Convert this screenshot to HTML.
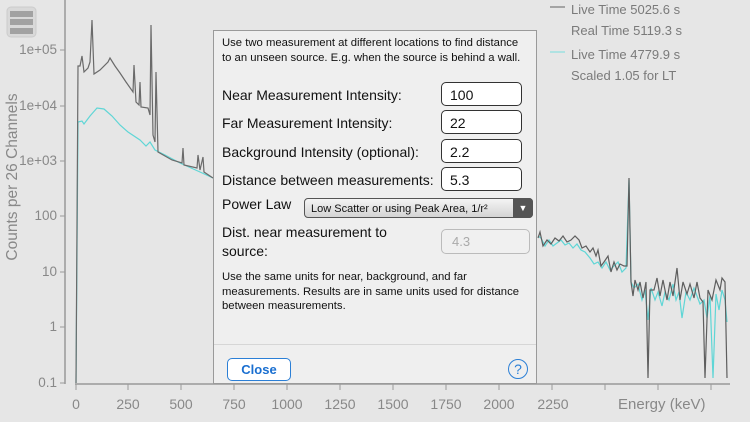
<!DOCTYPE html>
<html><head><style>
body{margin:0;width:750px;height:422px;background:#e6e6e6;font-family:"Liberation Sans",sans-serif;overflow:hidden;position:relative}
.a{position:absolute}
.dlg{position:absolute;left:213px;top:30px;width:324px;height:354px;background:#efefef;border:1px solid #9a9a9a;box-sizing:border-box}
.lab{position:absolute;left:8px;font-size:14px;color:#111}
.inp{position:absolute;left:227px;width:81px;height:24px;box-sizing:border-box;border:1px solid #333;border-radius:5px;background:#fff;font-size:14px;padding:4px 0 0 8px;color:#111}
.sm{position:absolute;left:8px;font-size:11.3px;line-height:14.5px;color:#111}
.yl{position:absolute;right:693px;font-size:13.5px;color:#888;text-align:right}
.xl{position:absolute;top:396px;font-size:14px;color:#888;transform:translateX(-50%)}
.leg{position:absolute;left:571px;font-size:13px;color:#7a7a7a}
</style></head><body>
<svg class="a" style="left:0;top:0" width="750" height="422">
<line x1="65" y1="0" x2="65" y2="384" stroke="#999" stroke-width="1.5"/>
<line x1="75" y1="384" x2="730" y2="384" stroke="#999" stroke-width="1.5"/>
<g stroke="#999">
<line x1="60" y1="50" x2="65" y2="50"/><line x1="60" y1="106" x2="65" y2="106"/><line x1="60" y1="161" x2="65" y2="161"/><line x1="60" y1="216" x2="65" y2="216"/><line x1="60" y1="272" x2="65" y2="272"/><line x1="60" y1="327" x2="65" y2="327"/><line x1="60" y1="383" x2="65" y2="383"/>
<line x1="76" y1="384" x2="76" y2="390"/><line x1="128" y1="384" x2="128" y2="390"/><line x1="181" y1="384" x2="181" y2="390"/><line x1="234" y1="384" x2="234" y2="390"/><line x1="287" y1="384" x2="287" y2="390"/><line x1="340" y1="384" x2="340" y2="390"/><line x1="393" y1="384" x2="393" y2="390"/><line x1="446" y1="384" x2="446" y2="390"/><line x1="499" y1="384" x2="499" y2="390"/><line x1="552" y1="384" x2="552" y2="390"/><line x1="605" y1="384" x2="605" y2="390"/><line x1="658" y1="384" x2="658" y2="390"/><line x1="711" y1="384" x2="711" y2="390"/>
</g>
<polyline fill="none" stroke="#5fd6d6" stroke-width="1.2" points="76,383 78,122 82,121 84,124 90,116 97,108 104,109 112,116 120,125 128,132 140,140 146,146 150,142 155,150 165,155 180,163 200,172 213,178"/>
<polyline fill="none" stroke="#6a6a6a" stroke-width="1.2" points="76,383 78,66 80,66 82,56 84,72 88,68 90,62 92,20 94,74 100,70 108,62 110,58 115,66 120,73 126,82 133,92 134,65 136,102 139,105 140,82 141,107 148,108 150,115 151,25 153,135 155,142 156,72 158,152 165,156 172,160 182,163 183,148 184,165 197,168 198,155 200,170 203,157 204,172 213,178"/>
<polyline fill="none" stroke="#5fd6d6" stroke-width="1.2" points="538,236 541,238 545,246 549,240 553,246 557,243 561,240 565,245 569,243 573,248 577,244 581,250 585,252 590,258 594,264 598,262 602,268 606,262 610,270 614,266 618,262 622,272 626,268 629,180 631,282 634,288 638,284 642,300 645,290 648,320 651,288 655,300 658,292 662,306 665,292 669,300 673,284 676,300 679,292 682,318 686,292 690,300 694,288 697,296 700,304 704,300 707,318 710,296 713,378 716,294 719,310 722,290 725,300 727,322"/>
<polyline fill="none" stroke="#5e5e5e" stroke-width="1.2" points="538,238 540,232 543,246 547,240 551,244 555,238 559,241 563,236 567,242 571,240 575,236 579,240 582,248 586,246 590,252 593,248 596,256 598,250 601,266 604,262 608,256 611,272 614,262 617,270 620,264 624,266 627,266 629,178 631,282 633,296 635,280 638,290 640,282 643,298 646,282 648,378 650,290 654,290 657,278 660,296 663,280 667,300 670,282 673,296 677,268 680,300 683,282 687,294 690,284 694,298 697,282 700,298 703,302 705,378 708,290 712,300 716,280 720,290 722,278 725,282 727,378"/>
<line x1="550" y1="7" x2="565" y2="7" stroke="#777" stroke-width="1.2"/>
<line x1="550" y1="52" x2="565" y2="52" stroke="#8ae0e0" stroke-width="1.2"/>
<rect x="7" y="7" width="29" height="30" rx="4" fill="#d9d9d9" stroke="#ccc"/>
<rect x="10" y="11" width="23" height="6" fill="#a2a2a2"/><rect x="10" y="19" width="23" height="6" fill="#a2a2a2"/><rect x="10" y="28" width="23" height="6" fill="#a2a2a2"/>
</svg>
<div class="a" style="left:-87px;top:168px;width:200px;transform:rotate(-90deg);font-size:15.5px;color:#888;white-space:nowrap;text-align:center">Counts per 26 Channels</div>
<div class="yl" style="top:42px">1e+05</div><div class="yl" style="top:98px">1e+04</div><div class="yl" style="top:153px">1e+03</div><div class="yl" style="top:208px">100</div><div class="yl" style="top:264px">10</div><div class="yl" style="top:319px">1</div><div class="yl" style="top:375px">0.1</div>
<div class="xl" style="left:76px">0</div><div class="xl" style="left:128px">250</div><div class="xl" style="left:181px">500</div><div class="xl" style="left:234px">750</div><div class="xl" style="left:287px">1000</div><div class="xl" style="left:340px">1250</div><div class="xl" style="left:393px">1500</div><div class="xl" style="left:446px">1750</div><div class="xl" style="left:499px">2000</div><div class="xl" style="left:553px">2250</div>
<div class="a" style="left:618px;top:396px;font-size:15px;color:#888">Energy (keV)</div>
<div class="leg" style="top:2px">Live Time 5025.6 s</div>
<div class="leg" style="top:23px">Real Time 5119.3 s</div>
<div class="leg" style="top:47px">Live Time 4779.9 s</div>
<div class="leg" style="top:68px">Scaled 1.05 for LT</div>
<div class="dlg">
<div class="sm" style="top:5px">Use two measurement at different locations to find distance<br>to an unseen source. E.g. when the source is behind a wall.</div>
<div class="lab" style="top:56px">Near Measurement Intensity:</div>
<div class="lab" style="top:84px">Far Measurement Intensity:</div>
<div class="lab" style="top:113px">Background Intensity (optional):</div>
<div class="lab" style="top:141px">Distance between measurements:</div>
<div class="lab" style="top:165px">Power Law</div>
<div class="lab" style="top:192px;line-height:19px">Dist. near measurement to<br>source:</div>
<div class="inp" style="top:51px">100</div>
<div class="inp" style="top:79px">22</div>
<div class="inp" style="top:108px">2.2</div>
<div class="inp" style="top:136px">5.3</div>
<div class="a" style="left:90px;top:167px;width:229px;height:20px;box-sizing:border-box;border:1px solid #555;border-radius:4px;background:linear-gradient(#f4f4f4,#d4d4d4);font-size:11px;padding:4px 0 0 6px;color:#111">Low Scatter or using Peak Area, 1/r²<div class="a" style="right:-1px;top:-1px;width:20px;height:20px;background:#555;border-radius:0 4px 4px 0;color:#fff;font-size:9px;text-align:center;line-height:20px">▼</div></div>
<div class="a" style="left:227px;top:198px;width:89px;height:25px;box-sizing:border-box;border:1px solid #bbb;border-radius:5px;background:#f0f0f0;font-size:13px;padding:4px 0 0 10px;color:#aaa">4.3</div>
<div class="sm" style="top:239px">Use the same units for near, background, and far<br>measurements. Results are in same units used for distance<br>between measurements.</div>
<div class="a" style="left:0;top:313px;width:322px;height:1px;background:#d6d6d6"></div>
<div class="a" style="left:13px;top:327px;width:64px;height:23px;box-sizing:border-box;border:1px solid #2b7fd6;border-radius:5px;background:#fff;color:#1a6fd0;font-weight:bold;font-size:13px;text-align:center;line-height:21px">Close</div>
<div class="a" style="left:294px;top:328px;width:18px;height:18px;border:1.5px solid #2b7fd6;border-radius:50%;color:#2b7fd6;font-size:14px;text-align:center;line-height:18px">?</div>
</div>
</body></html>
